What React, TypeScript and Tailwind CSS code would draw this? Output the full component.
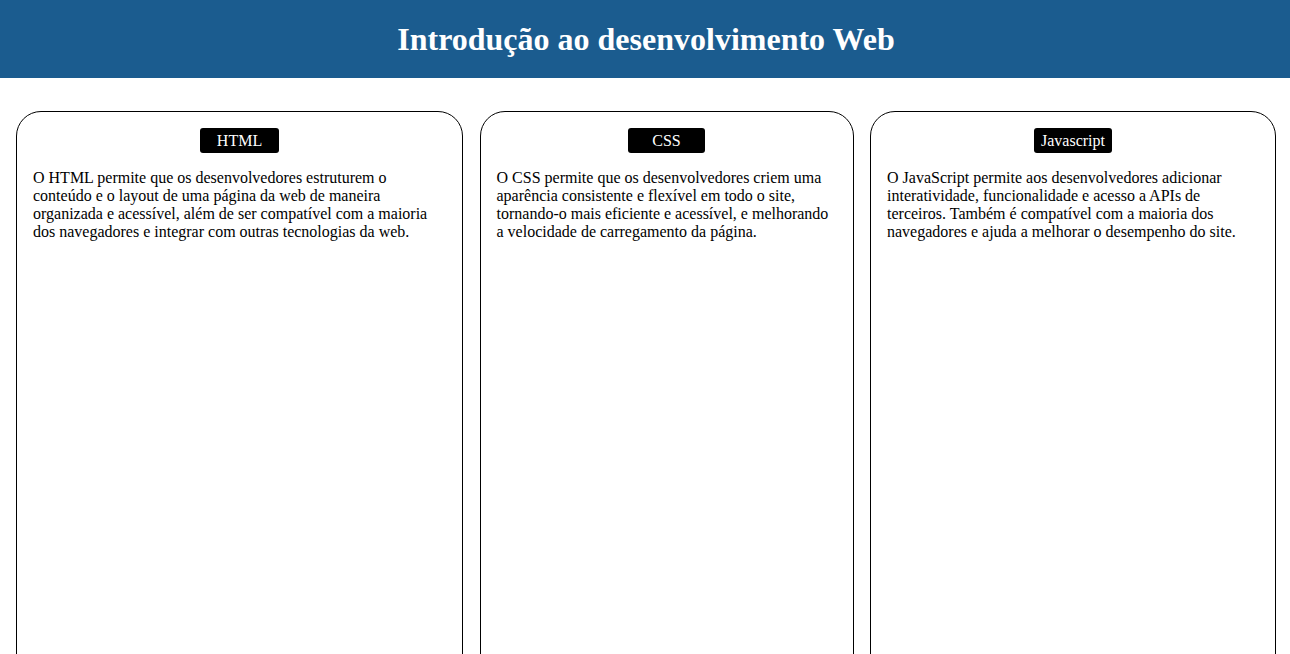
import React from "react";

const cards = [
  {
    title: "HTML",
    w: "w-[447px]",
    bw: "w-[79px]",
    text: "O HTML permite que os desenvolvedores estruturem o conteúdo e o layout de uma página da web de maneira organizada e acessível, além de ser compatível com a maioria dos navegadores e integrar com outras tecnologias da web.",
  },
  {
    title: "CSS",
    w: "w-[374px]",
    bw: "w-[77px]",
    text: "O CSS permite que os desenvolvedores criem uma aparência consistente e flexível em todo o site, tornando-o mais eficiente e acessível, e melhorando a velocidade de carregamento da página.",
  },
  {
    title: "Javascript",
    w: "w-[406px]",
    bw: "w-[78px]",
    text: "O JavaScript permite aos desenvolvedores adicionar interatividade, funcionalidade e acesso a APIs de terceiros. Também é compatível com a maioria dos navegadores e ajuda a melhorar o desempenho do site.",
  },
];

export default function App() {
  return (
    <div className="min-h-screen bg-white text-black" style={{ fontFamily: '"Liberation Serif", "Times New Roman", serif' }}>
      <header className="h-[78px] bg-[#1b5c8f] flex items-center justify-center">
        <h1 className="text-[32px] font-bold text-white leading-none pl-[2px]">Introdução ao desenvolvimento Web</h1>
      </header>
      <main className="flex gap-[16.5px] px-4 pt-[33px]">
        {cards.map((c) => (
          <section
            key={c.title}
            className={`${c.w} h-[570px] shrink-0 border border-black rounded-[25px] p-4 flex flex-col items-center`}
          >
            <div className={`${c.bw} h-[25px] bg-black text-white rounded-[3px] text-base flex items-center justify-center`}>
              {c.title}
            </div>
            <p className="mt-[16px] text-base leading-[18px] self-stretch">{c.text}</p>
          </section>
        ))}
      </main>
    </div>
  );
}
